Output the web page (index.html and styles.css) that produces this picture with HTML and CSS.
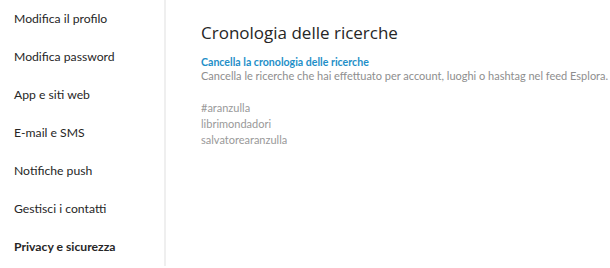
FILE: index.html
```html
<!DOCTYPE html>
<html>
<head>
	<title>Cronologia delle ricerche</title>
	<link rel="stylesheet" href="styles.css">
</head>
<body>

<div class="pagina">
	<ul class="menu">
		<li>Modifica il profilo</li>
		<li>Modifica password</li>
		<li>App e siti web</li>
		<li>E-mail e SMS</li>
		<li>Notifiche push</li>
		<li>Gestisci i contatti</li>
		<li class="attivo">Privacy e sicurezza</li>
	</ul>

	<div class="contenuto">
		<h2>Cronologia delle ricerche</h2>
		<a class="cancella" href="#">Cancella la cronologia delle ricerche</a>
		<p class="nota">Cancella le ricerche che hai effettuato per account, luoghi o hashtag nel feed Esplora.</p>

		<ul class="ricerche">
			<li>#aranzulla</li>
			<li>librimondadori</li>
			<li>salvatorearanzulla</li>
		</ul>
	</div>
</div>

</body>
</html>
```
FILE: styles.css
```css
html, body {
	margin: 0;
	padding: 0;
}

body {
	background-color: white;
	font-family: Lato, "Open Sans", sans-serif;
	color: #262626;
}

div.pagina {
	display: flex;
	height: 268px;
}

ul.menu {
	list-style: none;
	margin: 0;
	padding: 0;
	width: 164px;
	flex-shrink: 0;
	height: 266px;
	border-right: 2px solid #efefef;
}

ul.menu li {
	font-size: 12.2px;
	line-height: 38px;
	padding-left: 14px;
}

ul.menu li.attivo {
	font-weight: 700;
}

div.contenuto {
	padding: 22px 0 0 35px;
	white-space: nowrap;
}

div.contenuto h2 {
	margin: 0 0 11px;
	font-family: "Open Sans", sans-serif;
	font-size: 17px;
	font-weight: 400;
	line-height: 22px;
}

a.cancella {
	display: block;
	font-size: 10.6px;
	font-weight: 700;
	color: #1f8fc8;
	text-decoration: none;
	line-height: 14px;
}

p.nota {
	margin: 0;
	font-size: 11px;
	color: #8e8e8e;
	line-height: 14px;
}

ul.ricerche {
	list-style: none;
	margin: 17px 0 0;
	padding: 0;
}

ul.ricerche li {
	font-size: 11px;
	color: #999;
	line-height: 16px;
}
```
